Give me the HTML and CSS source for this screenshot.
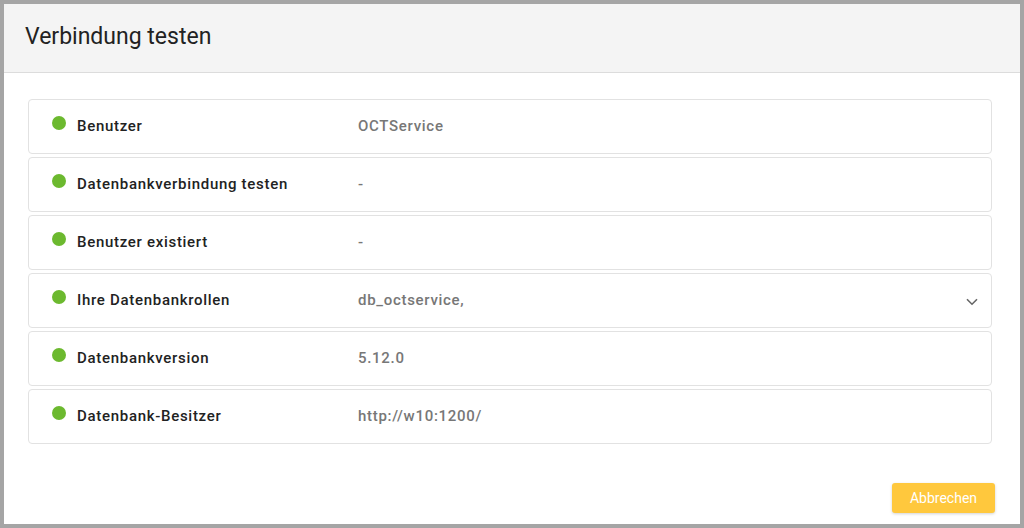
FILE: index.html
```html
<!DOCTYPE html>
<html lang="de">
<head>
<meta charset="utf-8">
<title>Verbindung testen</title>
<link rel="stylesheet" href="styles.css">
</head>
<body>
<div class="dialog">
  <div class="dialog-header">
    <h1 class="dialog-title">Verbindung testen</h1>
  </div>
  <div class="dialog-body">
    <div class="check-row">
      <span class="dot"></span>
      <span class="label">Benutzer</span>
      <span class="value">OCTService</span>
    </div>
    <div class="check-row">
      <span class="dot"></span>
      <span class="label">Datenbankverbindung testen</span>
      <span class="value">-</span>
    </div>
    <div class="check-row">
      <span class="dot"></span>
      <span class="label">Benutzer existiert</span>
      <span class="value">-</span>
    </div>
    <div class="check-row">
      <span class="dot"></span>
      <span class="label">Ihre Datenbankrollen</span>
      <span class="value">db_octservice,</span>
      <svg class="chevron" width="12" height="8" viewBox="0 0 12 8"><path d="M1 1.2 L6 6.2 L11 1.2" fill="none" stroke="#666" stroke-width="1.6"/></svg>
    </div>
    <div class="check-row">
      <span class="dot"></span>
      <span class="label">Datenbankversion</span>
      <span class="value">5.12.0</span>
    </div>
    <div class="check-row">
      <span class="dot"></span>
      <span class="label">Datenbank-Besitzer</span>
      <span class="value">http://w10:1200/</span>
    </div>
  </div>
  <div class="dialog-footer">
    <button class="btn-cancel">Abbrechen</button>
  </div>
</div>
</body>
</html>
```

FILE: styles.css
```css
* { box-sizing: border-box; }
html, body { margin: 0; padding: 0; }
body {
  font-family: Roboto, "Liberation Sans", sans-serif;
  background: #fff;
}
.dialog {
  width: 1024px;
  height: 528px;
  border: 4px solid #a5a5a5;
  display: flex;
  flex-direction: column;
  background: #fff;
}
.dialog-header {
  height: 69px;
  background: #f4f4f4;
  border-bottom: 1px solid #dcdcdc;
  padding: 20px 21px 0;
}
.dialog-title {
  margin: 0;
  font-size: 23px;
  font-weight: 400;
  color: #222;
  line-height: 26px;
}
.dialog-body {
  padding: 26px 28px 0 24px;
  display: flex;
  flex-direction: column;
  gap: 3px;
}
.check-row {
  height: 55px;
  border: 1px solid #e2e2e2;
  border-radius: 4px;
  display: flex;
  align-items: center;
  padding: 0 13px 2px 23px;
}
.dot {
  width: 14px;
  height: 14px;
  border-radius: 50%;
  background: #6cb92f;
  margin-bottom: 5px;
  flex: none;
}
.label {
  width: 281px;
  margin-left: 11px;
  font-size: 15px;
  font-weight: 500;
  color: #222;
  letter-spacing: 0.7px;
  flex: none;
}
.value {
  flex: 1;
  font-size: 15px;
  font-weight: 500;
  color: #777;
  letter-spacing: 0.7px;
}
.chevron { flex: none; margin-top: 4px; }
.dialog-footer {
  margin-top: auto;
  display: flex;
  justify-content: flex-end;
  padding: 0 25px 11px;
}
.btn-cancel {
  width: 103px;
  height: 30px;
  border: none;
  border-radius: 3px;
  background: #ffc83d;
  color: #fff;
  font-family: Roboto, "Liberation Sans", sans-serif;
  font-size: 14px;
  box-shadow: 0 1px 3px rgba(0,0,0,0.18);
}
```
